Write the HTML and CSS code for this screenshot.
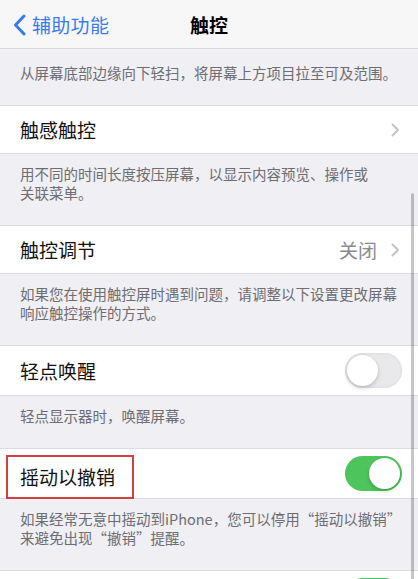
FILE: index.html
```html
<!DOCTYPE html>
<html lang="zh-CN">
<head>
<meta charset="utf-8">
<title>触控</title>
<link rel="stylesheet" href="styles.css">
</head>
<body>
<div class="screen">
  <header class="nav">
    <div class="nav-back">
      <svg class="back-chevron" width="13" height="22" viewBox="0 0 13 22"><path d="M11 2 L2.5 11 L11 20" fill="none" stroke="#3a7bea" stroke-width="3" stroke-linecap="round" stroke-linejoin="round"/></svg>
      <span class="back-label">辅助功能</span>
    </div>
    <div class="nav-title">触控</div>
  </header>

  <div class="footer footer-first"><span class="line">从屏幕底部边缘向下轻扫，将屏幕上方项目拉至可及范围。</span></div>

  <div class="row">
    <span class="row-label">触感触控</span>
    <span class="row-right">
      <svg class="chevron" width="9" height="14" viewBox="0 0 9 14"><path d="M1.5 1.5 L7 7 L1.5 12.5" fill="none" stroke="#c4c4c8" stroke-width="2" stroke-linecap="round" stroke-linejoin="round"/></svg>
    </span>
  </div>
  <div class="footer"><span class="line">用不同的时间长度按压屏幕，以显示内容预览、操作或</span><span class="line">关联菜单。</span></div>

  <div class="row">
    <span class="row-label">触控调节</span>
    <span class="row-right">
      <span class="row-value">关闭</span>
      <svg class="chevron" width="9" height="14" viewBox="0 0 9 14"><path d="M1.5 1.5 L7 7 L1.5 12.5" fill="none" stroke="#c4c4c8" stroke-width="2" stroke-linecap="round" stroke-linejoin="round"/></svg>
    </span>
  </div>
  <div class="footer"><span class="line">如果您在使用触控屏时遇到问题，请调整以下设置更改屏幕</span><span class="line">响应触控操作的方式。</span></div>

  <div class="row row-toggle">
    <span class="row-label">轻点唤醒</span>
    <span class="toggle"><span class="knob"></span></span>
  </div>
  <div class="footer"><span class="line">轻点显示器时，唤醒屏幕。</span></div>

  <div class="row row-toggle">
    <span class="row-label highlight">摇动以撤销</span>
    <span class="toggle on"><span class="knob"></span></span>
  </div>
  <div class="footer"><span class="line">如果经常无意中摇动到iPhone，您可以停用“摇动以撤销”</span><span class="line">来避免出现“撤销”提醒。</span></div>

  <div class="row row-toggle">
    <span class="row-label"></span>
    <span class="toggle on"><span class="knob"></span></span>
  </div>

  <div class="scrollbar"></div>
</div>
</body>
</html>
```

FILE: styles.css
```css
* { box-sizing: border-box; }

html, body {
  margin: 0;
  padding: 0;
}

body {
  width: 418px;
  height: 579px;
  overflow: hidden;
  background: #efeff4;
  font-family: "Noto Sans CJK SC", "Noto Sans", sans-serif;
  color: #111;
}

.screen {
  position: relative;
  width: 418px;
  height: 579px;
  overflow: hidden;
}

.nav {
  height: 49px;
  background: #f7f7f8;
  border-bottom: 1px solid #d9d9dd;
  display: flex;
  align-items: center;
  justify-content: center;
  position: relative;
}

.nav-back {
  position: absolute;
  left: 13px;
  top: 14px;
  display: flex;
  align-items: center;
  gap: 6px;
  height: 22px;
}

.back-label {
  font-size: 19px;
  line-height: 22px;
  color: #3a7bea;
  letter-spacing: 0.3px;
}

.nav-title {
  font-size: 19px;
  font-weight: 600;
  color: #000;
  line-height: 22px;
  margin-top: 2px;
}

.footer {
  padding: 10px 12px 23px 20px;
  font-size: 14.5px;
  color: #6d6d72;
  white-space: nowrap;
  display: flex;
  flex-direction: column;
}

.footer .line {
  display: block;
  height: 19px;
  line-height: 19px;
  overflow: visible;
}

.footer-first {
  padding-top: 14px;
}

.row {
  height: 49px;
  background: #fff;
  border-top: 1px solid #dcdce0;
  border-bottom: 1px solid #dcdce0;
  display: flex;
  align-items: center;
  justify-content: space-between;
  padding: 0 18px 0 20px;
}

.row-toggle {
  height: 51px;
  padding-right: 16px;
}

.row-label {
  font-size: 19px;
  line-height: 24px;
  color: #111;
}

.row-label.highlight {
  display: flex;
  align-items: center;
  height: 44px;
  margin-left: -14px;
  padding: 0 17px 0 12px;
  border: 2px solid #d23f47;
  margin-top: 6px;
}

.row-right {
  display: flex;
  align-items: center;
  gap: 14px;
}

.row-value {
  font-size: 19px;
  line-height: 24px;
  color: #8a8a8e;
}

.chevron {
  display: block;
}

.toggle {
  position: relative;
  width: 57px;
  height: 35px;
  border-radius: 18px;
  background: #e9e9eb;
  box-shadow: inset 0 0 0 1.5px #e2e2e5;
  display: block;
}

.toggle .knob {
  position: absolute;
  top: 2px;
  left: 2px;
  width: 31px;
  height: 31px;
  border-radius: 50%;
  background: #fff;
  box-shadow: 0 2px 4px rgba(0,0,0,0.18), 0 0 0 0.5px rgba(0,0,0,0.06);
}

.toggle.on {
  background: #4dc55c;
  box-shadow: none;
}

.toggle.on .knob {
  left: 24px;
}

.scrollbar {
  position: absolute;
  left: 411px;
  top: 193px;
  width: 3px;
  height: 400px;
  border-radius: 2px;
  background: rgba(0,0,0,0.22);
}
```
